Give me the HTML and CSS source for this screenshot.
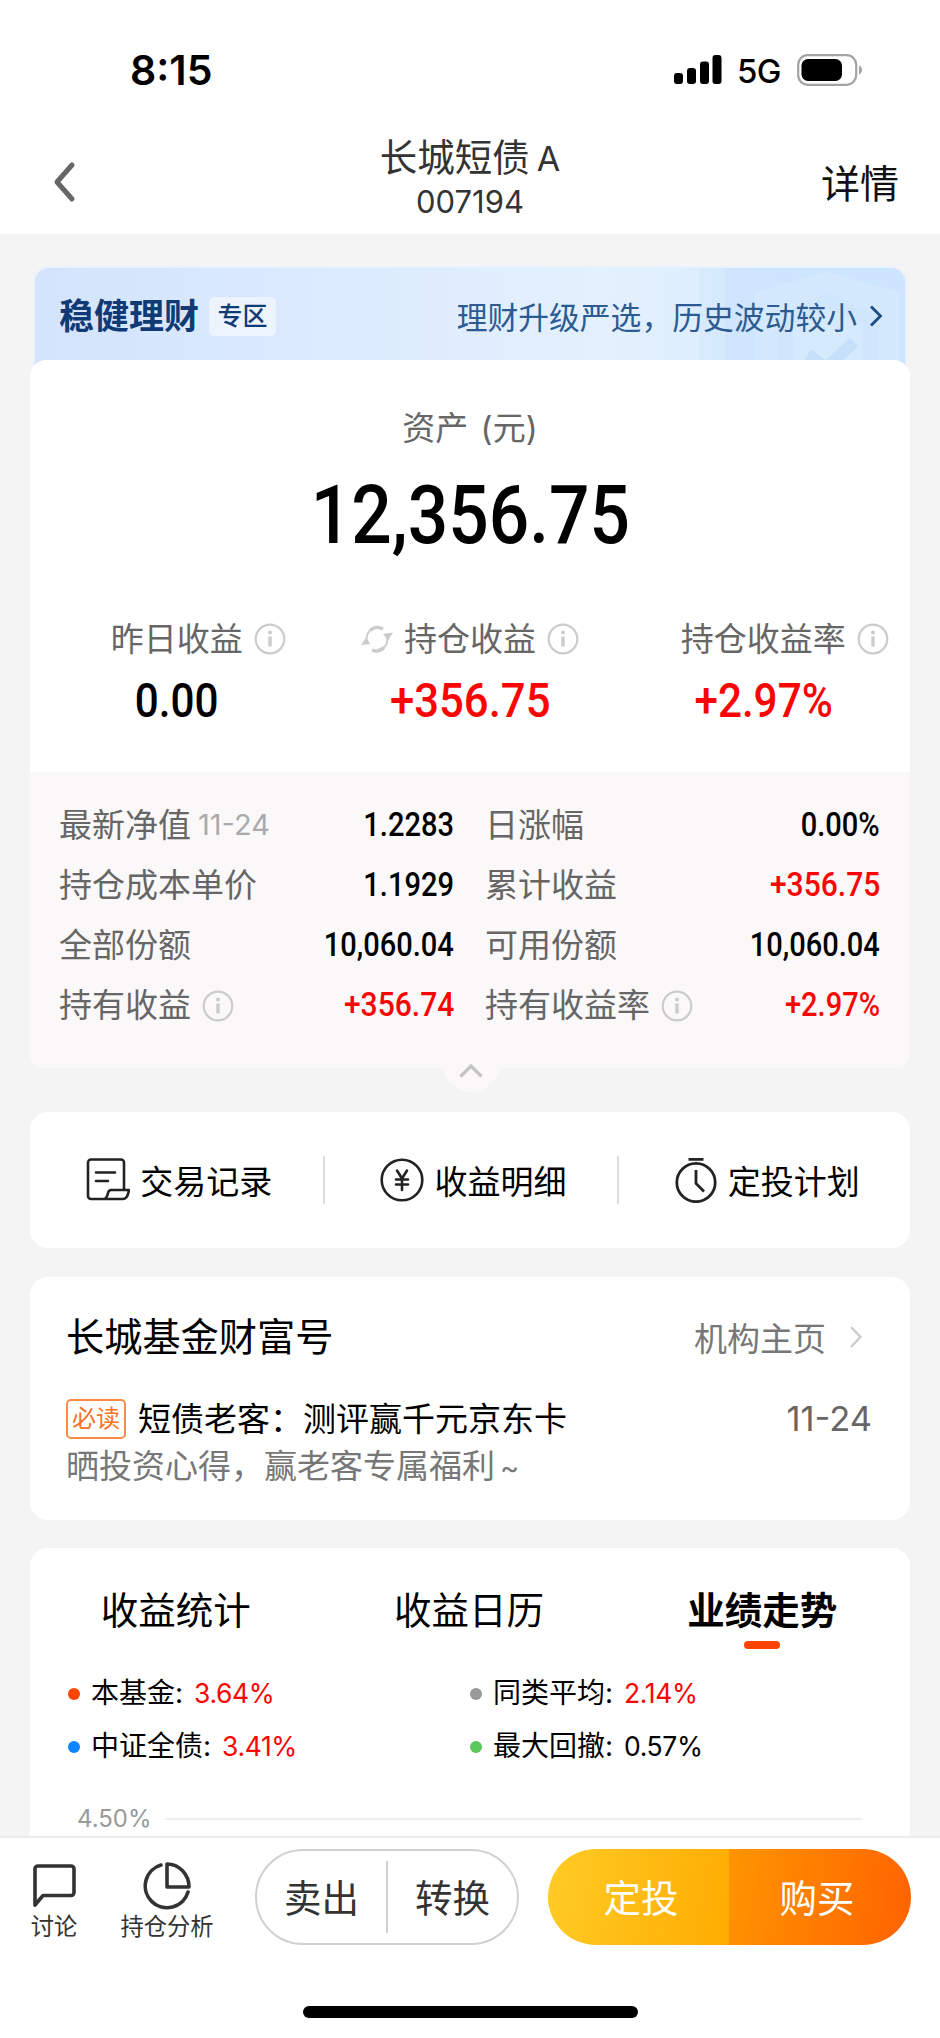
FILE: index.html
```html
<!DOCTYPE html>
<html lang="zh-CN">
<head>
  <meta charset="UTF-8" />
  <meta name="viewport" content="width=device-width, initial-scale=1" />
  <title>长城短债A</title>
  <link rel="stylesheet" href="styles.css">
</head>
<body>
  <svg width="0" height="0" class="sprite">
    <symbol id="info" viewBox="0 0 32 32">
      <circle cx="16" cy="16" r="14.3" fill="none" stroke="#ccc" stroke-width="2.2"/>
      <circle cx="16" cy="9.6" r="2" fill="#ccc"/>
      <path d="M16 13.5v10" stroke="#ccc" stroke-width="3.4"/>
    </symbol>
  </svg>

  <header>
    <div class="status-bar">
      <span class="time">8:15</span>
      <div class="status-icons">
        <svg width="48" height="30" viewBox="0 0 48 30">
          <rect x="0" y="18" width="9" height="11" rx="3"/>
          <rect x="13" y="13" width="9" height="16" rx="3"/>
          <rect x="26" y="6.5" width="9" height="22.5" rx="3"/>
          <rect x="38.5" y="0" width="9" height="29" rx="3"/>
        </svg>
        <span class="network">5G</span>
        <svg width="66" height="32" viewBox="0 0 66 32">
          <rect x="1.2" y="1.2" width="58" height="29.6" rx="9.5" fill="none" stroke="#a3a3a3" stroke-width="2.2"/>
          <rect x="4.5" y="5" width="40.5" height="22" rx="6.5"/>
          <path d="M62 11.5c4 1.500 4 7.500 0 9z" fill="#a3a3a3"/>
        </svg>
      </div>
    </div>
    <nav>
      <svg class="back" width="24" height="42" viewBox="0 0 24 42"><path d="M20 4L5 21l15 17" fill="none" stroke="#666" stroke-width="5" stroke-linecap="round" stroke-linejoin="round"/></svg>
      <div class="nav-title">
        <h1>长城短债<span>A</span></h1>
        <p>007194</p>
      </div>
      <a class="nav-detail">详情</a>
    </nav>
  </header>

  <main>
    <section class="asset">
      <div class="banner">
        <svg class="banner-art" width="220" height="110" viewBox="0 0 220 110">
          <path d="M14 0h26v110H14z" fill="#cde5fd" opacity=".4"/>
          <path d="M40 0h180v110H40z" fill="#c9e3fd" opacity=".75"/>
          <path d="M70 24L142 4l72 20v86H70z" fill="#d6eafd" opacity=".8"/>
          <path d="M92 48l50-24 50 24v62H92z" fill="#cfe6fd"/>
          <path d="M108 56l34-16 36 16v54h-70z" fill="#d6eafd"/>
          <path d="M123 86l18 14 28-26" fill="none" stroke="#c6e0fa" stroke-width="12"/>
        </svg>
        <strong>稳健理财</strong>
        <span class="zone">专区</span>
        <span class="slogan">理财升级严选，历史波动较小</span>
        <svg class="go" width="14" height="24" viewBox="0 0 14 24"><path d="M2 2.5l9.500 9.500L2 21.5" fill="none" stroke="#1d4c85" stroke-width="2.8"/></svg>
      </div>

      <div class="summary">
        <p class="label">资产 (元)</p>
        <p class="total"><span class="num">12,356.75</span></p>
        <div class="stats">
          <div class="stat">
            <div class="stat-label"><i></i><span>昨日收益</span><svg class="info"><use href="#info"/></svg></div>
            <div class="stat-value"><span class="num">0.00</span></div>
          </div>
          <div class="stat">
            <div class="stat-label">
              <svg class="refresh" viewBox="0 0 32 28">
                <path d="M6 17A10.500 11.500 0 0 1 9 5.500M26 11A10.500 11.500 0 0 1 23 22.500" fill="none" stroke="#ccc" stroke-width="2"/>
                <path d="M9 5.500A11 11.500 0 0 1 22 4M23 22.500A11 11.500 0 0 1 11 25" fill="none" stroke="#ccc" stroke-width="3.4"/>
                <path d="M0 20l5-7.500 4.500 6.500zM32 7.500L27 15.500 22 9z" fill="#ccc"/>
              </svg>
              <span>持仓收益</span><svg class="info"><use href="#info"/></svg>
            </div>
            <div class="stat-value red"><span class="num wide">+356.75</span></div>
          </div>
          <div class="stat">
            <div class="stat-label"><i></i><span>持仓收益率</span><svg class="info"><use href="#info"/></svg></div>
            <div class="stat-value red"><span class="num">+2.97%</span></div>
          </div>
        </div>
      </div>

      <div class="details">
        <div class="row"><span>最新净值</span><small>11-24</small><b class="num">1.2283</b></div>
        <div class="row"><span>日涨幅</span><b class="num">0.00%</b></div>
        <div class="row"><span>持仓成本单价</span><b class="num">1.1929</b></div>
        <div class="row"><span>累计收益</span><b class="num wide red">+356.75</b></div>
        <div class="row"><span>全部份额</span><b class="num">10,060.04</b></div>
        <div class="row"><span>可用份额</span><b class="num">10,060.04</b></div>
        <div class="row"><span>持有收益</span><svg class="info"><use href="#info"/></svg><b class="num wide red">+356.74</b></div>
        <div class="row"><span>持有收益率</span><svg class="info"><use href="#info"/></svg><b class="num red">+2.97%</b></div>
        <div class="fold">
          <svg width="26" height="16" viewBox="0 0 26 16"><path d="M2.5 13.5L13 3l10.500 10.500" fill="none" stroke="#c4c4c4" stroke-width="3.2"/></svg>
        </div>
      </div>
    </section>

    <section class="card actions">
      <a>
        <svg width="44" height="46" viewBox="0 0 44 46" fill="none" stroke="#222" stroke-width="2.6" stroke-linejoin="round" stroke-linecap="round">
          <path d="M38 33V5.500a3 3 0 0 0-3-3H5a3 3 0 0 0-3 3v33.500a3 3 0 0 0 3 3h32c3 0 5-3 6-9H25c-1.500 0-2.500 1-3 3-.6 3-1.500 6-4.500 6"/>
          <path d="M10 15.5h19M10 24h12"/>
        </svg>
        <span>交易记录</span>
      </a>
      <a>
        <svg width="44" height="46" viewBox="0 0 44 46" fill="none" stroke="#222" stroke-width="2.6" stroke-linecap="round">
          <circle cx="22" cy="23" r="20.3"/>
          <path d="M17 13.5l5 8 5-8M22 21.5V33M16 22.500h12M16 27.500h12"/>
        </svg>
        <span>收益明细</span>
      </a>
      <a>
        <svg width="44" height="46" viewBox="0 0 44 46" fill="none" stroke="#222" stroke-width="2.8">
          <circle cx="22" cy="25.5" r="19.2"/>
          <path d="M14.5 2.300h15M22 13v13.500l8 8"/>
        </svg>
        <span>定投计划</span>
      </a>
    </section>

    <section class="card wealth">
      <div class="wealth-head">
        <h2>长城基金财富号</h2>
        <span>机构主页</span>
        <svg width="14" height="24" viewBox="0 0 14 24"><path d="M2 2l9.500 10L2 22" fill="none" stroke="#ccc" stroke-width="2.4"/></svg>
      </div>
      <div class="post">
        <em>必读</em>
        <span>短债老客：测评赢千元京东卡</span>
        <time>11-24</time>
      </div>
      <p>晒投资心得，赢老客专属福利<span>~</span></p>
    </section>

    <section class="card trend">
      <div class="tabs">
        <a>收益统计</a>
        <a>收益日历</a>
        <a class="active">业绩走势</a>
      </div>
      <ul class="legend">
        <li class="fund">本基金: <span class="red">3.64%</span></li>
        <li class="avg">同类平均: <span class="red">2.14%</span></li>
        <li class="index">中证全债: <span class="red">3.41%</span></li>
        <li class="drawdown">最大回撤: <span>0.57%</span></li>
      </ul>
      <div class="axis">4.50%</div>
    </section>
  </main>

  <footer>
    <div class="toolbar">
      <a class="tool discuss">
        <svg width="48" height="50" viewBox="0 0 48 50"><path d="M5 44V8a3 3 0 0 1 3-3h33a3 3 0 0 1 3 3v23.500a3 3 0 0 1-3 3H13z" fill="none" stroke="#333" stroke-width="3.6" stroke-linejoin="round"/></svg>
        讨论
      </a>
      <a class="tool analysis">
        <svg width="48" height="50" viewBox="0 0 48 50" fill="none" stroke="#333" stroke-width="3.6" stroke-linejoin="round" stroke-linecap="round">
          <path d="M18 4A21.800 21.800 0 1 0 45 31"/>
          <path d="M24 3v23h22A22 23 0 0 0 24 3z"/>
        </svg>
        持仓分析
      </a>
      <div class="pill">
        <button>卖出</button>
        <button>转换</button>
      </div>
      <div class="pill primary">
        <button class="plan">定投</button>
        <button class="buy">购买</button>
      </div>
    </div>
    <div class="home-bar"></div>
  </footer>
</body>
</html>
```
FILE: styles.css
```css
* {
  margin: 0;
  padding: 0;
  box-sizing: border-box;
}

body {
  width: 940px;
  height: 2038px;
  overflow: hidden;
  display: flex;
  flex-direction: column;
  background: #f4f4f4;
  color: #000;
  font-family: Inter, "Noto Sans CJK SC", sans-serif;
  font-size: 33px;
}

svg {
  display: block;
  flex: none;
}

.sprite {
  position: absolute;
}

.red {
  color: #fa0505;
}

/* narrow figures */
.num {
  display: inline-block;
  font-family: Roboto, sans-serif;
  font-weight: 500;
  transform: scaleX(0.88);
}

.num.wide {
  transform: scaleX(0.91);
}

header {
  height: 234px;
  background: #fff;
}

.status-bar {
  height: 124px;
  padding: 16px 77px 0 130px;
  display: flex;
  justify-content: space-between;
  align-items: center;
}

.time {
  font-size: 41px;
  font-weight: 600;
}

.status-icons {
  display: flex;
  align-items: center;
}

.network {
  margin: 2px 16px 0 15px;
  font-size: 33px;
  font-weight: 500;
  letter-spacing: -0.5px;
}

nav {
  height: 110px;
  padding: 0 41px 0 52px;
  display: grid;
  grid-template-columns: 1fr auto 1fr;
  align-items: center;
}

.back {
  margin-top: 6px;
}

.nav-title {
  margin-left: -11px;
  padding-bottom: 2px;
  color: #333;
  text-align: center;
}

.nav-title h1 {
  font-size: 37.5px;
  font-weight: 400;
  line-height: 46px;
}

.nav-title h1 span {
  margin-left: 7px;
  font-size: 34px;
}

.nav-title p {
  font-size: 31px;
  line-height: 40px;
}

.nav-detail {
  margin-top: 3px;
  text-align: right;
  font-size: 39px;
  color: #111;
}

main {
  flex: 1;
  min-height: 0;
  overflow: hidden;
  padding: 32px 30px 0;
}

.banner {
  position: relative;
  height: 110px;
  margin: 0 3px -16px;
  padding: 0 22px 12px 24px;
  display: flex;
  align-items: center;
  overflow: hidden;
  border: 2px solid #eaf3fd;
  border-bottom: 0;
  border-radius: 16px 16px 0 0;
  background: linear-gradient(90deg, #d3e4fc, #e3f0fe 65%, #d5e9fd);
  color: #103a75;
}

.banner-art {
  position: absolute;
  top: 0;
  right: 0;
}

.banner strong {
  font-size: 35px;
  line-height: 48px;
}

.zone {
  width: 67px;
  margin-left: 10px;
  border-radius: 5px;
  background: #edf4fe;
  text-align: center;
  font-size: 25px;
  font-weight: 500;
  line-height: 39px;
}

.slogan {
  position: relative;
  margin: -2px 0 0 auto;
  color: #2d5b91;
  font-size: 30.8px;
}

.go {
  position: relative;
  margin-left: 12px;
}

.summary {
  position: relative;
  height: 412px;
  padding-top: 44px;
  border-radius: 16px 16px 0 0;
  background: #fff;
  text-align: center;
}

.label {
  line-height: 48px;
  color: #666;
  word-spacing: 3px;
}

.total {
  margin-top: 14px;
  font-size: 81px;
  line-height: 96px;
}

.stats {
  margin-top: 51px;
  display: grid;
  grid-template-columns: repeat(3, 1fr);
}

.stat-label {
  display: grid;
  grid-template-columns: 1fr auto 1fr;
  align-items: center;
  gap: 11px;
  line-height: 48px;
  color: #666;
}

.info {
  width: 32px;
  height: 32px;
}

.refresh {
  width: 32px;
  height: 28px;
  justify-self: end;
}

.stat-value {
  margin-top: 7px;
  font-size: 48px;
  line-height: 60px;
}

.details {
  position: relative;
  height: 296px;
  padding: 23px 30px 0 29px;
  display: grid;
  grid-template-columns: 395px 395px;
  grid-auto-rows: 60px;
  column-gap: 31px;
  border-radius: 0 0 14px 14px;
  background: #fbf8f9;
}

.row {
  display: flex;
  align-items: center;
  line-height: 48px;
  padding-bottom: 1px;
  color: #666;
}

.row small {
  margin-left: 7px;
  font-size: 29px;
  color: #aaa;
}

.row .info {
  margin: 2px 0 0 11px;
}

.row .num {
  margin-left: auto;
  color: #000;
  transform-origin: right;
}

.row .red {
  color: #fa0505;
}

.fold {
  position: absolute;
  left: 412px;
  bottom: -24px;
  width: 58px;
  height: 58px;
  padding: 29px 16px 0;
  border-radius: 50%;
  background: #fbf8f9;
}

.card {
  border-radius: 18px;
  background: #fff;
}

.actions {
  height: 136px;
  margin-top: 44px;
  display: grid;
  grid-template-columns: repeat(3, 1fr);
  align-items: center;
}

.actions a {
  height: 48px;
  padding-left: 5px;
  display: flex;
  justify-content: center;
  align-items: center;
  gap: 10px;
}

.actions a + a {
  border-left: 2px solid #ddd;
}

.wealth {
  height: 243px;
  margin-top: 29px;
  padding: 32px 38px 0 36px;
}

.wealth-head {
  display: flex;
  align-items: center;
}

.wealth-head h2 {
  font-size: 38.2px;
  font-weight: 400;
  line-height: 56px;
}

.wealth-head span {
  margin-left: auto;
  color: #777;
}

.wealth-head svg {
  margin: 0 9px 0 23px;
}

.post {
  margin-top: 30px;
  display: flex;
  align-items: center;
  line-height: 48px;
}

.post em {
  width: 60px;
  margin-right: 12px;
  border: 2px solid #fb8b48;
  border-radius: 5px;
  color: #f7711f;
  text-align: center;
  font-size: 24px;
  font-style: normal;
  line-height: 36px;
}

.post time {
  margin-left: auto;
  color: #666;
  font-size: 34.5px;
}

.wealth p {
  margin-top: -1px;
  line-height: 48px;
  color: #777;
}

.wealth p span {
  margin-left: 5px;
  font-size: 29px;
}

.trend {
  height: 400px;
  margin-top: 28px;
  padding-top: 28px;
}

.tabs {
  display: grid;
  grid-template-columns: repeat(3, 1fr);
  text-align: center;
  font-size: 37.5px;
  line-height: 70px;
}

.tabs a {
  position: relative;
  right: 1px;
}

.tabs .active {
  font-weight: 700;
}

.tabs .active::after {
  content: "";
  display: block;
  width: 36px;
  height: 8px;
  margin: -5px auto 0;
  border-radius: 4px;
  background: #ff4400;
}

.legend {
  margin-top: 18px;
  padding-left: 38px;
  display: grid;
  grid-template-columns: 402px 1fr;
  list-style: none;
  font-size: 28px;
  line-height: 53px;
}

.legend li {
  display: flex;
  align-items: center;
  gap: 11px;
}

.legend li::before {
  content: "";
  width: 12px;
  height: 12px;
  border-radius: 50%;
}

.legend span {
  font-size: 26.5px;
  letter-spacing: -0.4px;
}

.legend .fund::before {
  background: #ff4400;
}

.legend .avg::before {
  background: #999;
}

.legend .index::before {
  background: #0a84ff;
}

.legend .drawdown::before {
  background: #5ac85a;
}

.axis {
  margin-top: 26px;
  padding: 0 47px;
  display: flex;
  align-items: center;
  gap: 13px;
  color: #999;
  font-size: 24px;
  line-height: 40px;
}

.axis::after {
  content: "";
  flex: 1;
  height: 2px;
  background: #eee;
}

footer {
  height: 202px;
  border-top: 2px solid #ececec;
  background: #fff;
}

.toolbar {
  height: 170px;
  padding: 11px 29px 0 0;
  display: flex;
  align-items: flex-start;
}

.tool {
  padding-top: 12px;
  display: flex;
  flex-direction: column;
  align-items: center;
  color: #333;
  font-size: 23.3px;
  line-height: 32px;
}

.discuss {
  width: 108px;
}

.analysis {
  width: 118px;
}

.pill {
  width: 264px;
  height: 96px;
  margin-left: 29px;
  display: flex;
  align-items: center;
  overflow: hidden;
  border: 2px solid #d0d0d0;
  border-radius: 48px;
}

.pill button {
  flex: 1;
  height: 72px;
  padding-bottom: 4px;
  border: 0;
  background: none;
  color: #333;
  font: inherit;
  font-size: 37.5px;
}

.pill button + button {
  border-left: 2px solid #d0d0d0;
}

.primary {
  width: 363px;
  border: 0;
}

.primary button,
.primary button + button {
  height: 96px;
  border: 0;
  color: #fff;
}

.primary .plan {
  padding-left: 5px;
  background: linear-gradient(100deg, #ffcc26, #ffab00);
}

.primary .buy {
  padding-right: 6px;
  background: linear-gradient(100deg, #ff9500, #ff6200);
}

.home-bar {
  width: 335px;
  height: 12px;
  margin: -2px auto 0;
  border-radius: 6px;
  background: #000;
}
```
